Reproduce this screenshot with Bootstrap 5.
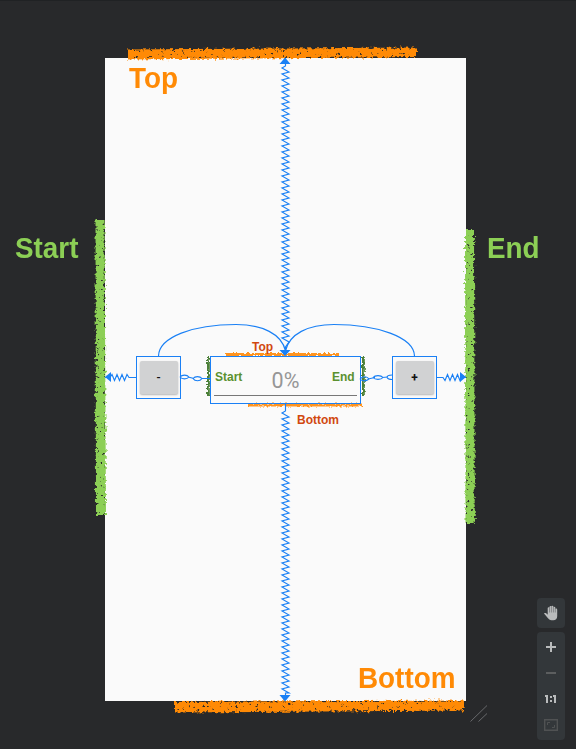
<!DOCTYPE html>
<html lang="en">
<head>
<meta charset="utf-8">
<meta name="viewport" content="width=device-width, initial-scale=1">
<title>Layout constraints</title>
<link href="https://cdn.jsdelivr.net/npm/bootstrap@5.3.0/dist/css/bootstrap.min.css" rel="stylesheet">
<style>
  body { background: #28292b; font-family: "Liberation Sans", Arial, sans-serif; }
  .editor { width: 576px; height: 749px; border-top: 1px solid #202224; }
  .editor > * { margin-top: -1px; }
  .device { left: 105px; top: 58px; width: 361px; height: 643px; background: #fafafa; }
  .wires { left: 0; top: 0; width: 576px; height: 749px; pointer-events: none; }
  .node { border: 1px solid #1a80f5; }
  .node-minus { left: 136px; top: 356px; width: 45px; height: 43px; }
  .node-plus { left: 392px; top: 356px; width: 45px; height: 43px; }
  .node-value { left: 210px; top: 356px; width: 151px; height: 48px; }
  .key { width: 38px; height: 33px; background: #d1d2d3; border-radius: 2px; box-shadow: 0 1px 2px rgba(0,0,0,.28); font: 500 12px/35px Roboto, sans-serif; color: #111; }
  .percent { font: 400 21.5px/47px Roboto, sans-serif; color: #969696; }
  .underline { left: 3px; right: 3px; bottom: 7px; height: 1px; background: #777; }
  .tag { font-weight: 700; line-height: 1; white-space: nowrap; }
  .tag-lg { font-size: 29px; transform: scaleX(.96); transform-origin: left; }
  .tag-sm { font-size: 12px; }
  .orange { color: #ff8a05; } .lime { color: #8ccf55; } .rust { color: #d1480f; } .moss { color: #5b9130; }
  .t1 { left: 129px; top: 64px; } .t2 { left: 358px; top: 664px; }
  .t3 { left: 15px; top: 234px; } .t4 { left: 487px; top: 234px; }
  .t5 { left: 252px; top: 341px; } .t6 { left: 297px; top: 414px; }
  .t7 { left: 215px; top: 371px; } .t8 { left: 332px; top: 371px; }
  .tools { right: 11px; bottom: 9px; gap: 4px; width: 28px; }
  .tool-group { background: #33373a; border-radius: 4px; }
  .tool-zoom { height: 108px; }
  .tool-group .btn { width: 28px; height: 26px; border: 0; }
  .tool-group .btn-pan { height: 30px; }
  .tool-group .btn svg { display: block; }
</style>
<script src="https://cdn.jsdelivr.net/npm/bootstrap@5.3.0/dist/js/bootstrap.bundle.min.js"></script>
</head>
<body class="m-0 overflow-hidden">
<main class="editor position-relative overflow-hidden">
  <div class="device position-absolute"></div>
  <svg class="wires position-absolute" viewBox="0 0 576 749">
    <defs>
      <filter id="chalk" filterUnits="userSpaceOnUse" x="0" y="0" width="576" height="749" color-interpolation-filters="sRGB">
        <feTurbulence type="fractalNoise" baseFrequency=".34" numOctaves="2" seed="4" result="n"/>
        <feDisplacementMap in="SourceGraphic" in2="n" scale="6" xChannelSelector="R" yChannelSelector="G" result="d"/>
        <feColorMatrix in="n" type="matrix" values="0 0 0 0 0  0 0 0 0 0  0 0 0 0 0  0 0 10 0 -2.2" result="h"/>
        <feComposite in="d" in2="h" operator="in"/>
      </filter>
      <filter id="chalk-fine" filterUnits="userSpaceOnUse" x="190" y="340" width="190" height="75" color-interpolation-filters="sRGB">
        <feTurbulence type="fractalNoise" baseFrequency=".4" numOctaves="2" seed="8" result="n"/>
        <feDisplacementMap in="SourceGraphic" in2="n" scale="4" xChannelSelector="R" yChannelSelector="G"/>
      </filter>
    </defs>
    <g filter="url(#chalk)">
      <path fill="#ff8a05" d="M127 49.500L417 47.500V57L127 59.500ZM174 702L464 700.500V710.500L174 712.500Z"/>
      <path fill="#8ccf55" d="M95.500 220H104.500L106 515H96ZM465 230H474L474.800 523H465.500Z"/>
    </g>
    <g filter="url(#chalk-fine)">
      <path fill="#ff9420" d="M225 353H339V356H225ZM248 403.500H362V406.500H248Z"/>
      <path fill="#4c8038" d="M207 357H209.800V396H207ZM362 357H364.800V396H362Z"/>
    </g>
    <g fill="none" stroke="#1a80f5" stroke-width="1.150">
      <path id="zig-up"/><path id="zig-down"/>
      <path d="M105 377.500H110L112 374.500L114.500 380.500L117 374.500L119.500 380.500L122 374.500L124.500 380.500L127 374.500L129 377.500H136"/>
      <path d="M437 377.500H443L445 380.500L447.500 374.500L450 380.500L452.500 374.500L455 380.500L457.500 374.500L460 380.500L461 377.500H466"/>
      <path d="M158.500 356C159 337 193 324.500 236 324.500C262 324.500 282 334 285.500 351M414.500 356C414 337 377 324.500 334 324.500C308 324.500 289 334 285.500 351"/>
      <path d="M180 377C182 374.500 187 374.500 189 377C187 379.500 182 379.500 180 377M188 377L194 378.500M193 378.500C195 376 200 376 202 378.500C200 381.500 195 381.500 193 378.500M202 378.500H210"/>
      <path d="M360 379C363 376 367 376 369 379C366 381.500 362 381.500 360 379M368 379L375 377.500M373 377.500C375 375 381 375 383 377.500C381 380 375 380 373 377.500M382 377.500L388 377M392 375C389 375 387 376 387 377.500C388 379.500 390 379.500 392 379.500"/>
    </g>
    <path fill="#1a80f5" d="M285 57.500L290.500 64H279.500ZM285 356L279.500 350H290.500ZM285 701.500L279.500 695H290.500ZM105 377L111 372V382ZM466 377L460 372V382Z"/>
    <path fill="none" stroke="#77797b" stroke-width=".8" d="M470.500 721.500L487 705.500M478.500 721.500L487 713.500"/>
  </svg>

  <div class="node node-minus position-absolute d-flex align-items-center justify-content-center"><div class="key text-center">-</div></div>
  <div class="node node-value position-absolute text-center">
    <div class="percent">0%</div><div class="underline position-absolute"></div>
  </div>
  <div class="node node-plus position-absolute d-flex align-items-center justify-content-center"><div class="key text-center fw-bold">+</div></div>

  <span class="tag tag-lg orange t1 position-absolute">Top</span>
  <span class="tag tag-lg orange t2 position-absolute">Bottom</span>
  <span class="tag tag-lg lime t3 position-absolute">Start</span>
  <span class="tag tag-lg lime t4 position-absolute">End</span>
  <span class="tag tag-sm rust t5 position-absolute">Top</span>
  <span class="tag tag-sm rust t6 position-absolute">Bottom</span>
  <span class="tag tag-sm moss t7 position-absolute">Start</span>
  <span class="tag tag-sm moss t8 position-absolute">End</span>

  <div class="tools position-absolute d-flex flex-column">
    <div class="tool-group">
      <button class="btn btn-pan p-0 d-flex align-items-center justify-content-center" aria-label="Pan">
        <svg width="14" height="16" viewBox="0 0 14 16"><path fill="#b9bbbc" d="M0 8.500C1 7.600 2.400 8 3.700 9.800V3.200C3.700 1.900 5.300 1.900 5.500 3.200V1.900C5.700.8 7.200.8 7.400 1.900V1.500C7.600.4 9.200.4 9.400 1.500V2.300C9.800 1.300 11.200 1.500 11.300 2.600V4.100C11.800 3.200 13.200 3.500 13.200 4.800V11.300C13.200 13.800 11.600 15.200 9.300 15.200H7.500C5.700 15.200 4.700 14.300 3.800 13.100Z"/><path stroke="#6e7173" stroke-width=".7" d="M5.500 3V7.500M7.400 2V7.500M9.400 2V7.500M11.300 3V7.500"/></svg>
      </button>
    </div>
    <div class="tool-group tool-zoom d-flex flex-column justify-content-center">
      <button class="btn p-0 d-flex align-items-center justify-content-center" aria-label="Zoom in"><svg width="10" height="10"><path stroke="#b9bbbc" stroke-width="2" d="M0 5H10M5 0V10"/></svg></button>
      <button class="btn p-0 d-flex align-items-center justify-content-center" aria-label="Zoom out"><svg width="10" height="10"><path stroke="#5c5e5f" stroke-width="2" d="M0 5H10"/></svg></button>
      <button class="btn p-0 d-flex align-items-center justify-content-center" aria-label="Actual size"><svg width="12" height="8"><path fill="#b9bbbc" d="M0 0H3V8H1V2H0ZM8 0H11V8H9V2H8ZM5 1H7V3H5ZM5 5H7V7H5Z"/></svg></button>
      <button class="btn p-0 d-flex align-items-center justify-content-center" aria-label="Fit to screen"><svg width="14" height="12" fill="none" stroke="#505253"><path stroke-width="1.400" d="M.7.7H13.300V11.300H.7Z"/><path d="M3.500 6V3.500H6M8 8.500H10.500V6"/></svg></button>
    </div>
  </div>
</main>
<script>
  // Springs: a sawtooth with a 6px period round the vertical guide
  function spring(id, from, start, end, to) {
    let d = `M285.500 ${from}V${start}`;
    for (let y = start + 2; y < end; y += 6) d += `L282 ${y}L289 ${y + 4}`;
    document.getElementById(id).setAttribute('d', d + `L285.500 ${end + 3}V${to}`);
  }
  spring('zig-up', 58, 66, 344, 352);
  spring('zig-down', 404, 411, 690, 698);
</script>
</body>
</html>
